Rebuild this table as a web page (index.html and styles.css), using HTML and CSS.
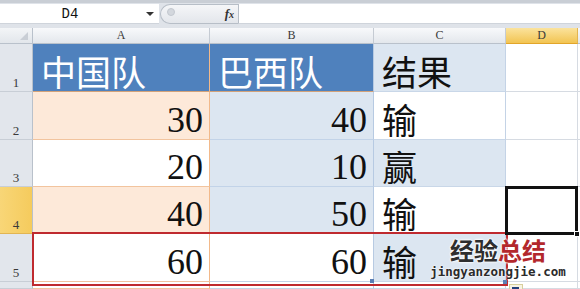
FILE: index.html
```html
<!DOCTYPE html>
<html lang="zh-CN">
<head>
<meta charset="utf-8">
<title>中国队 vs 巴西队</title>
<link rel="stylesheet" href="styles.css">
</head>
<body>
<div class="bar">
  <div class="namebox"><span class="ref">D4</span><span class="caret"></span></div>
  <div class="pill"><span class="knob"></span><span class="fx">f<span class="x">x</span></span></div>
  <div class="formula"></div>
</div>

<div class="sheet">
  <div class="corner"><span class="tri"></span></div>
  <div class="ch">A</div>
  <div class="ch">B</div>
  <div class="ch">C</div>
  <div class="ch sel">D</div>
  <div class="ch edge"></div>

  <div class="rh">1</div>
  <div class="cell colA hd t">中国队</div>
  <div class="cell colB hd t">巴西队</div>
  <div class="cell colC lb t dark">结果</div>
  <div class="cell"></div>
  <div class="cell edge"></div>

  <div class="rh">2</div>
  <div class="cell colA pe n">30</div>
  <div class="cell colB lb n">40</div>
  <div class="cell colC t dark">输</div>
  <div class="cell"></div>
  <div class="cell edge"></div>

  <div class="rh">3</div>
  <div class="cell colA n">20</div>
  <div class="cell colB lb n">10</div>
  <div class="cell colC lb t dark">赢</div>
  <div class="cell"></div>
  <div class="cell edge"></div>

  <div class="rh sel">4</div>
  <div class="cell colA pe n">40</div>
  <div class="cell colB lb n">50</div>
  <div class="cell colC t dark">输</div>
  <div class="cell"></div>
  <div class="cell edge"></div>

  <div class="rh">5</div>
  <div class="cell colA n">60</div>
  <div class="cell colB n">60</div>
  <div class="cell colC lb t dark">输</div>
  <div class="cell"></div>
  <div class="cell edge"></div>

  <div class="rh"></div>
  <div class="cell colA"></div>
  <div class="cell colB"></div>
  <div class="cell colC"></div>
  <div class="cell"></div>
  <div class="cell edge"></div>

  <!-- copy marquee around row 5 -->
  <div class="marquee"></div>
  <!-- active cell D4 -->
  <div class="active"><span class="handle"></span></div>
  <span class="mark m1"></span>
  <span class="mark m2"></span>
  <div class="paste"><span></span></div>

  <div class="stamp">
    <div class="stamp-cn"><span class="ink">经验</span><span class="red">总结</span></div>
    <div class="stamp-url">jingyanzongjie.com</div>
  </div>
</div>
</body>
</html>
```

FILE: styles.css
```css
* { box-sizing: border-box; margin: 0; padding: 0; }

body {
  width: 580px;
  height: 289px;
  overflow: hidden;
  background: #fff;
  font-family: "Liberation Serif", serif;
}

/* name box + formula bar */
.bar {
  height: 28px;
  display: flex;
  background: #dfe3e9;
  border-top: 3px solid #c9ced5;
  padding-top: 1px;
  padding-bottom: 4px;
}
.namebox {
  width: 159px;
  background: #fff;
  display: flex;
  align-items: center;
  border-bottom: 1px solid #cfd4db;
}
.ref {
  width: 140px;
  text-align: center;
  font: 14px "Liberation Mono", monospace;
  color: #111;
}
.caret {
  width: 0;
  height: 0;
  border-left: 4px solid transparent;
  border-right: 4px solid transparent;
  border-top: 4px solid #333;
  margin-left: 6px;
}
.pill {
  width: 78px;
  margin-left: 1px;
  display: flex;
  align-items: center;
  justify-content: space-between;
  padding: 0 4px 0 6px;
  background: linear-gradient(#f5f6f8, #e3e6eb);
  border: 1px solid #b7bec7;
  border-right: none;
  border-radius: 10px 0 0 10px;
}
.knob {
  width: 8px;
  height: 8px;
  border-radius: 50%;
  background: #d3d7dd;
  border: 1px solid #c3c8cf;
  margin-top: -4px;
}
.fx {
  font: italic bold 13px "Liberation Serif", serif;
  color: #333;
}
.fx .x { font-size: 10px; }
.formula {
  flex: 1;
  background: #fff;
  border-left: 1px solid #b7bec7;
  border-bottom: 1px solid #cfd4db;
}

/* worksheet grid */
.sheet {
  position: relative;
  display: grid;
  grid-template-columns: 33px 177px 164px 132px 72px 2px;
  grid-template-rows: 16px 48px 48px 47px 47px 48px 7px;
}

.corner {
  position: relative;
  background: linear-gradient(#f3f5f7, #e2e6eb);
  border-right: 1px solid #b9c1cb;
  border-bottom: 1px solid #b9c1cb;
}
.tri {
  position: absolute;
  right: 4px;
  bottom: 3px;
  width: 0;
  height: 0;
  border-left: 8px solid transparent;
  border-bottom: 8px solid #c9ced5;
}
.ch {
  background: linear-gradient(#f8f9fb, #e3e7ec);
  border-right: 1px solid #c5cbd3;
  border-bottom: 1px solid #b9c1cb;
  font-size: 12px;
  line-height: 15px;
  text-align: center;
  color: #3a3a3a;
}
.ch.sel {
  background: linear-gradient(#fbe39d, #f2c452);
  border-bottom: 1px solid #e2a52a;
  border-right-color: #e2b552;
}
.rh {
  display: flex;
  align-items: flex-end;
  justify-content: center;
  padding-bottom: 1px;
  background: #e2e6ec;
  border-right: 1px solid #b9c1cb;
  border-bottom: 1px solid #c8ced6;
  font-size: 13px;
  line-height: 14px;
  color: #3a3a3a;
}
.rh.sel {
  background: linear-gradient(90deg, #f8d677, #f5cb5d);
  border-bottom-color: #e2b552;
}

.cell {
  display: flex;
  align-items: flex-end;
  border-right: 1px solid #d6dbe2;
  border-bottom: 1px solid #d6dbe2;
  white-space: nowrap;
  min-width: 0;
}
.ch.edge, .cell.edge { border-right: none; }

.colA { border-right-color: #f2b98a; border-bottom-color: #f2c49e; }
.colB { border-right-color: #b7cae2; border-bottom-color: #c2d3e8; }
.colC { border-right-color: #c4d3e6; border-bottom-color: #c9d7e8; }

.hd { background: #4f81bd; color: #fff; border-bottom-color: #d2a27a; }
.pe { background: #fde9d9; }
.lb { background: #dce6f1; }

.n {
  justify-content: flex-end;
  padding: 0 6px 1px 0;
  font: 36px/36px "Liberation Serif", serif;
  color: #111;
}
.t {
  padding: 0 0 1px 8px;
  font: 35px/38px "Noto Sans CJK SC", sans-serif;
}
.dark { color: #111; }

/* overlays on the grid */
.marquee {
  position: absolute;
  left: 32px;
  top: 204px;
  width: 476px;
  height: 54px;
  border: 2px solid #bf2a2f;
}
.active {
  position: absolute;
  left: 505px;
  top: 158px;
  width: 73px;
  height: 49px;
  border: 3px solid #111;
}
.handle {
  position: absolute;
  right: -5px;
  bottom: -5px;
  width: 6px;
  height: 6px;
  background: #111;
  border: 1px solid #fff;
}
.mark {
  position: absolute;
  width: 4px;
  height: 4px;
  background: #5a7fb5;
}
.m1 { left: 370px; top: 251px; }
.m2 { left: 503px; top: 252px; }
.paste {
  position: absolute;
  left: 509px;
  top: 256px;
  width: 14px;
  height: 10px;
  background: #f7f3e2;
  border: 1px solid #d8cf9c;
  padding: 2px 0 0 2px;
}
.paste span {
  display: block;
  width: 7px;
  height: 6px;
  background: #243f7a;
}

/* site stamp */
.stamp {
  position: absolute;
  left: 428px;
  top: 211px;
  width: 140px;
  text-align: center;
}
.stamp-cn {
  font: bold 24px/22px "Noto Sans CJK SC", sans-serif;
  margin-bottom: 4px;
  text-shadow: 0 0 2px #fff, 0 0 2px #fff, 0 0 3px #fff;
}
.stamp-cn .ink { color: #2e2e2e; }
.stamp-cn .red { color: #b3282c; }
.stamp-url {
  font: bold 12.5px/13px "DejaVu Sans Mono", monospace;
  color: #2b2b2b;
  text-shadow: 0 0 2px #fff, 0 0 2px #fff;
}
```
